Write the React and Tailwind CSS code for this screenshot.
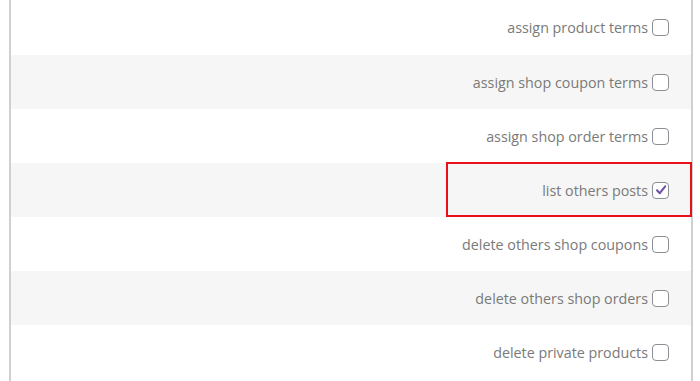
import React from 'react';

const rows = [
  { label: 'assign product terms', checked: false },
  { label: 'assign shop coupon terms', checked: false },
  { label: 'assign shop order terms', checked: false },
  { label: 'list others posts', checked: true, highlight: true },
  { label: 'delete others shop coupons', checked: false },
  { label: 'delete others shop orders', checked: false },
  { label: 'delete private products', checked: false },
];

const Checkbox = ({ checked }) => (
  <span className="flex h-[17px] w-[17px] shrink-0 items-center justify-center rounded-[4px] border border-[#8c8f94] bg-white">
    {checked && (
      <svg width="12" height="12" viewBox="0 0 12 12">
        <path d="M2 6.2 L4.8 9.2 L10.2 2.4" stroke="#6c4fa3" strokeWidth="2" fill="none" strokeLinecap="round" strokeLinejoin="round" />
      </svg>
    )}
  </span>
);

const App = () => {
  return (
    <div className="h-[381px] w-[700px] overflow-hidden bg-white font-['Open_Sans',sans-serif]">
      <div className="ml-[9px] mr-[7px] h-full border-l-2 border-r-2 border-[#d0d0d0]">
        {rows.map((row, i) => (
          <div
            key={row.label}
            className={`relative flex items-center justify-end pr-[22px] ${i === 0 ? 'h-[55px]' : 'h-[54px]'} ${i % 2 === 1 ? 'bg-[#f5f6f5]' : 'bg-white'}`}
          >
            <span className="mr-[4px] mt-[1px] text-[14.3px] text-[#7a7a7a]">{row.label}</span>
            <Checkbox checked={row.checked} />
            {row.highlight && (
              <div className="pointer-events-none absolute bottom-0 left-[435px] right-[-1px] top-[-1px] border-2 border-[#e8101a]" />
            )}
          </div>
        ))}
      </div>
    </div>
  );
};

export default App;
